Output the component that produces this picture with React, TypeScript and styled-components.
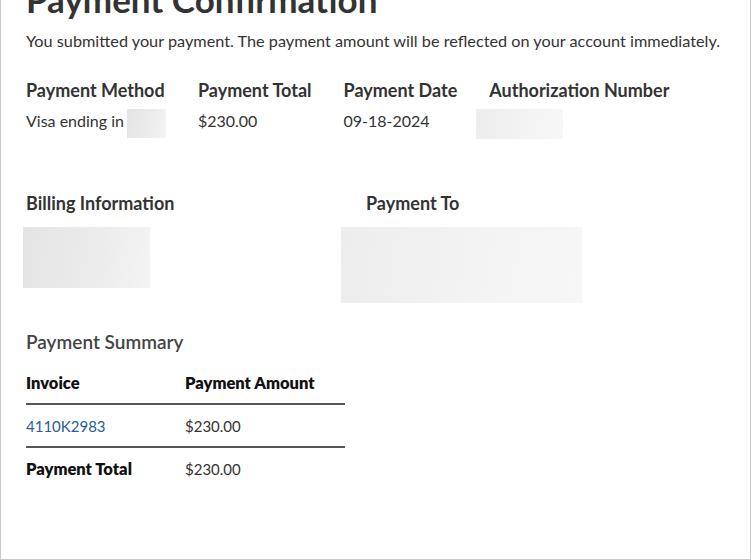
import styled, { createGlobalStyle } from "styled-components"

const GlobalStyle = createGlobalStyle`
    html, body {
        margin: 0;
        padding: 0;
        background: #ffffff;
    }

    body {
        font-family: Lato, "Noto Sans", sans-serif;
        color: #333333;
    }
`

const Frame = styled.div`
    box-sizing: border-box;
    width: 751px;
    height: 560px;
    overflow: hidden;
    border: 1px solid #c9c9c9;
    border-top: none;
    padding: 0 25px;
`

const Title = styled.h1`
    margin: -21px 0 0 0;
    font-size: 35px;
    line-height: 40px;
    font-weight: 700;
    color: #333333;
`

const Intro = styled.p`
    margin: 11px 0 0 0;
    font-size: 16.25px;
    line-height: 22px;
`

const DetailsRow = styled.div`
    display: flex;
    gap: 32px;
    margin-top: 26px;
`

const Detail = styled.div`
    display: flex;
    flex-direction: column;
`

const Label = styled.div`
    font-size: 18px;
    line-height: 24px;
    font-weight: 700;
    color: #333333;
`

const Value = styled.div`
    display: flex;
    align-items: flex-start;
    gap: 3px;
    margin-top: 7px;
    min-height: 30px;
    font-size: 16px;
    line-height: 24px;
`

interface RedactedProps {
    w: number
    h: number
    shift?: number
    light?: boolean
}

const Redacted = styled.div<RedactedProps>`
    width: ${props => props.w}px;
    height: ${props => props.h}px;
    margin-left: ${props => props.shift ?? 0}px;
    background: ${props => props.light
        ? 'linear-gradient(100deg, #ededed 0%, #f3f3f3 55%, #f7f7f7 100%)'
        : 'linear-gradient(100deg, #e4e4e4 0%, #ececec 60%, #f4f4f4 100%)'};
`

const InfoRow = styled.div`
    display: flex;
    margin-top: 52px;
`

const InfoBlock = styled.div<{ width: number }>`
    display: flex;
    flex-direction: column;
    width: ${props => props.width}px;
`

const InfoBody = styled.div`
    margin-top: 12px;
`

const SummaryTitle = styled.div`
    margin-top: 27px;
    font-size: 19px;
    line-height: 24px;
    font-weight: 600;
    color: #444444;
`

const Table = styled.div`
    width: 319px;
    margin-top: 8px;
`

const TableRow = styled.div<{ divider?: boolean }>`
    display: grid;
    grid-template-columns: 159px 1fr;
    align-items: center;
    height: 41px;
    border-bottom: ${props => props.divider ? '2px solid #555555' : 'none'};
    font-size: 15px;
`

const HeadCell = styled.div`
    font-size: 16.5px;
    font-weight: 800;
    color: #111111;
`

const Cell = styled.div`
    color: #333333;
`

const InvoiceLink = styled.a`
    color: #2a5c9a;
    text-decoration: none;
`

const App = () => {
    return (
        <>
            <GlobalStyle />
            <Frame>
                <Title>Payment Confirmation</Title>
                <Intro>
                    You submitted your payment. The payment amount will be reflected on your account immediately.
                </Intro>

                <DetailsRow>
                    <Detail>
                        <Label>Payment Method</Label>
                        <Value>
                            Visa ending in
                            <Redacted w={39} h={29} />
                        </Value>
                    </Detail>
                    <Detail>
                        <Label>Payment Total</Label>
                        <Value>$230.00</Value>
                    </Detail>
                    <Detail>
                        <Label>Payment Date</Label>
                        <Value>09-18-2024</Value>
                    </Detail>
                    <Detail>
                        <Label>Authorization Number</Label>
                        <Value>
                            <Redacted w={87} h={30} shift={-13} light />
                        </Value>
                    </Detail>
                </DetailsRow>

                <InfoRow>
                    <InfoBlock width={340}>
                        <Label>Billing Information</Label>
                        <InfoBody>
                            <Redacted w={127} h={61} shift={-3} />
                        </InfoBody>
                    </InfoBlock>
                    <InfoBlock width={300}>
                        <Label>Payment To</Label>
                        <InfoBody>
                            <Redacted w={241} h={76} shift={-25} light />
                        </InfoBody>
                    </InfoBlock>
                </InfoRow>

                <SummaryTitle>Payment Summary</SummaryTitle>

                <Table>
                    <TableRow divider>
                        <HeadCell>Invoice</HeadCell>
                        <HeadCell>Payment Amount</HeadCell>
                    </TableRow>
                    <TableRow divider>
                        <Cell>
                            <InvoiceLink href="#">4110K2983</InvoiceLink>
                        </Cell>
                        <Cell>$230.00</Cell>
                    </TableRow>
                    <TableRow>
                        <HeadCell>Payment Total</HeadCell>
                        <Cell>$230.00</Cell>
                    </TableRow>
                </Table>
            </Frame>
        </>
    )
}

export default App
